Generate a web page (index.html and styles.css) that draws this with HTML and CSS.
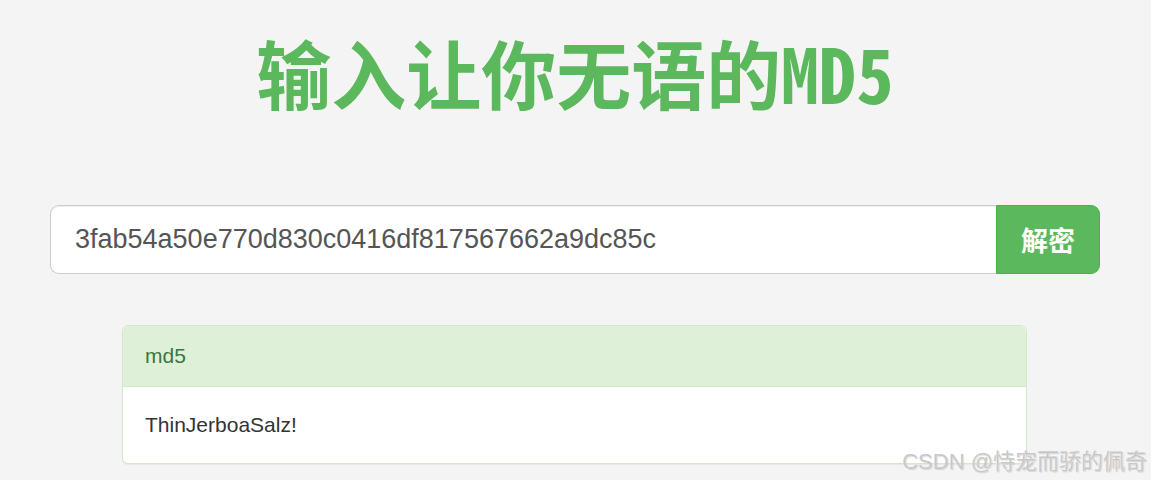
FILE: index.html
```html
<!DOCTYPE html>
<html lang="zh-CN">
<head>
    <meta charset="UTF-8">
    <meta name="viewport" content="width=device-width, initial-scale=1.0">
    <title>输入让你无语的MD5</title>
    <link rel="stylesheet" href="styles.css">
</head>
<body>
    <div class="container">
        <h1 class="title">输入让你无语的<span class="title-latin">MD5</span></h1>

        <form class="input-group" onsubmit="return false;">
            <input class="md5-input" type="text" value="3fab54a50e770d830c0416df817567662a9dc85c">
            <button class="btn-decrypt" type="submit">解密</button>
        </form>

        <div class="panel">
            <div class="panel-heading">md5</div>
            <div class="panel-body">ThinJerboaSalz!</div>
        </div>
    </div>

    <div class="watermark">CSDN @恃宠而骄的佩奇</div>
</body>
</html>
```

FILE: styles.css
```css
* {
    margin: 0;
    padding: 0;
    box-sizing: border-box;
}

html, body {
    height: 100%;
}

body {
    font-family: "Liberation Sans", Arial, "Noto Sans CJK SC", sans-serif;
    background: #f4f4f4;
    color: #333;
    padding-top: 34px;
    overflow: hidden;
    position: relative;
}

.container {
    width: 1050px;
    margin-left: 50px;
}

.title {
    font-family: "Noto Sans CJK SC", sans-serif;
    font-size: 75px;
    font-weight: 700;
    line-height: 1;
    color: #5cb85c;
    text-align: center;
}

.title-latin {
    font-family: "Noto Sans Mono CJK SC", "Noto Sans CJK SC", monospace;
}

.input-group {
    display: flex;
    margin-top: 96px;
    height: 69px;
}

.md5-input {
    flex: 1;
    height: 100%;
    padding: 0 24px;
    font-family: "Liberation Sans", Arial, sans-serif;
    font-size: 27px;
    color: #555;
    background: #fff;
    border: 1px solid #ccc;
    border-right: none;
    border-radius: 9px 0 0 9px;
    outline: none;
    box-shadow: inset 0 1px 1px rgba(0, 0, 0, 0.075);
}

.btn-decrypt {
    width: 104px;
    height: 100%;
    font-family: "Noto Sans CJK SC", sans-serif;
    font-size: 27px;
    font-weight: 700;
    color: #fff;
    background: #5cb85c;
    border: 1px solid #4cae4c;
    border-radius: 0 9px 9px 0;
    cursor: pointer;
}

.panel {
    width: 905px;
    margin: 51px 0 0 72px;
    background: #fff;
    border: 1px solid #d6e9c6;
    border-radius: 6px;
    box-shadow: 0 1px 1px rgba(0, 0, 0, 0.05);
    overflow: hidden;
}

.panel-heading {
    padding: 15px 22px;
    font-size: 21px;
    line-height: 30px;
    color: #3c763d;
    background: #dff0d8;
    border-bottom: 1px solid #d6e9c6;
}

.panel-body {
    padding: 23px 22px;
    font-size: 21px;
    line-height: 30px;
    color: #333;
}

.watermark {
    position: absolute;
    right: 4px;
    bottom: 5px;
    font-family: "Liberation Sans", Arial, "Noto Sans CJK SC", sans-serif;
    font-size: 22px;
    color: #c8c8c8;
    text-shadow: 0 0 1px #fff, 1px 1px 1px rgba(0, 0, 0, 0.15);
}
```
